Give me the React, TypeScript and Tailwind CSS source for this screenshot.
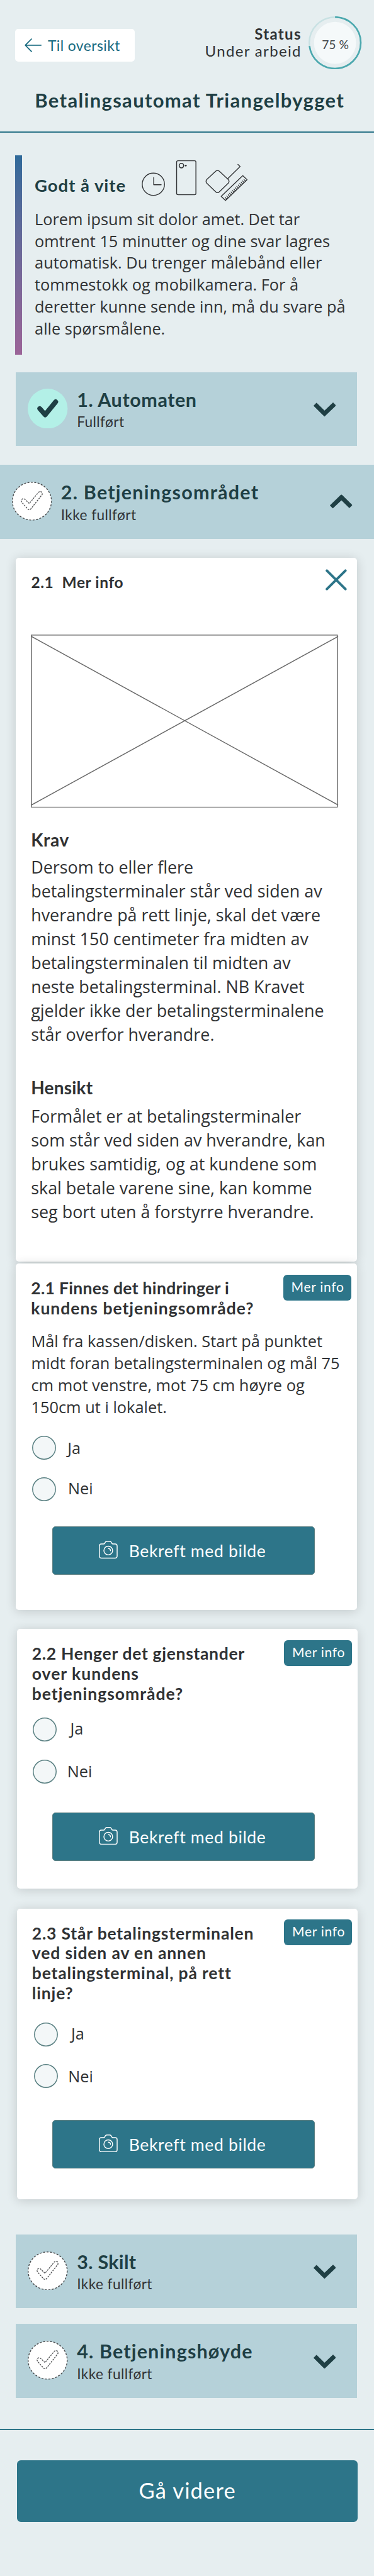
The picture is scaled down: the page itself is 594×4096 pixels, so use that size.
import type { ReactNode } from "react";
import clsx from "clsx";

function BackArrow() {
  return (
    <svg className="h-[22px] w-[27px]" viewBox="0 0 27 22" fill="none" stroke="#15687e" strokeWidth="1.7" strokeLinecap="round" strokeLinejoin="round">
      <path d="M11 1 L1.2 10.8 L11 20.8 M1.2 10.8 H26.2" />
    </svg>
  );
}

function Progress() {
  return (
    <div className="relative h-[84.2px] w-[84.2px]">
      <svg className="h-full w-full" viewBox="0 0 84 84" fill="none">
        <circle cx="42" cy="42" r="33.3" fill="#f5f9fa" />
        <circle cx="42" cy="42" r="40.8" stroke="#c8e1e3" strokeWidth="2.4" />
        <circle cx="42" cy="42" r="40.8" stroke="#4ba8ae" strokeWidth="2.6" pathLength="100" strokeDasharray="73 27" transform="rotate(-90 42 42)" />
      </svg>
      <span className="absolute inset-x-0 top-0 text-center text-[19.3px] leading-[89px] text-[#444648]">75 %</span>
    </div>
  );
}

const TICKS = Array.from({ length: 14 }, (_, i) => (i + 0.9) / 15);

function ToolIcons() {
  return (
    <svg className="h-[83.4px] w-[174.2px]" viewBox="36 6 660 316" fill="none" stroke="#303234" strokeWidth="5.2" strokeLinecap="round" strokeLinejoin="round">
      <circle cx="114" cy="180" r="67" />
      <path d="M116 139 V183 H161" />
      <rect x="254" y="38.500" width="116" height="205" rx="8" />
      <circle cx="283" cy="68" r="13.500" strokeWidth="6" />
      <circle cx="309" cy="68" r="5.500" fill="#303234" stroke="none" />
      <path d="M489 102 Q500 92 511 102 L564 151 Q575 163 564 175 L511 226 Q500 236 489 226 L436 175 Q426 163 436 151 Z" />
      <path d="M561 147 L636 73 L623 61" />
      <path d="M652 128 L678 153 L548 278 L522 253 Z" />
      {TICKS.map((t) => (
        <path key={t} strokeWidth="4.500" d={`M${548 + 130 * t} ${278 - 125 * t} l-9 -11`} />
      ))}
    </svg>
  );
}

function DoneMark() {
  return (
    <svg className="mt-[25.8px] h-[63.5px] w-[63.4px] shrink-0" viewBox="0 0 63.4 63.5" fill="none">
      <circle cx="31.700" cy="31.750" r="31.700" fill="#b3f0e7" />
      <path d="M19.2 31.800 L27.7 41.500 L44.4 21" stroke="#1f3f44" strokeWidth="7.800" strokeLinecap="round" strokeLinejoin="round" />
    </svg>
  );
}

function PendingMark() {
  return (
    <svg className="mt-[26.8px] h-[61.6px] w-[63.4px] shrink-0" viewBox="27 54 240 233" fill="none" stroke="#4c4e50">
      <ellipse cx="147" cy="170.500" rx="117.500" ry="114" fill="#fff" strokeWidth="5.500" strokeDasharray="11.500 9.200" />
      <path strokeWidth="5.200" strokeDasharray="10 6" d="M131 185 L105 160 Q97 152 88 159 Q80 167 86 177 L122 218 Q131 226 140 218 L208 132 Q212 122 204 115 Q195 110 187 117 Z" />
    </svg>
  );
}

function Chevron({ up = false }: { up?: boolean }) {
  return (
    <svg className={clsx("ml-auto h-[22.4px] w-[35.6px]", up ? "mt-[46.4px] mr-[34px] rotate-180" : "mt-[48.3px] mr-[33.6px]")} viewBox="0 0 35.6 22.4" fill="#1f3f44" stroke="#1f3f44" strokeWidth="1.2" strokeLinejoin="round">
      <path d="M.7 5.200 L4.700 1.200 L17.400 13.700 L31 .7 L34.900 4.700 L17.400 21.700 Z" />
    </svg>
  );
}

function CameraIcon() {
  return (
    <svg className="h-[28.2px] w-[29.9px]" viewBox="0 0 79 75" fill="none" stroke="#fff" strokeWidth="3.800" strokeLinecap="round" strokeLinejoin="round">
      <path d="M10 13.500 H19 Q23 13.500 25 9.500 L28 4.500 Q30 2 34 2 H45 Q49 2 51 4.500 L54 9.500 Q56 13.500 60 13.500 H69 Q77 13.500 77 22 V64 Q77 73 69 73 H10 Q2 73 2 64 V22 Q2 13.500 10 13.500 Z" />
      <circle cx="39.500" cy="41" r="18.500" />
      <path d="M40 32.500 Q49 33 49 42" />
    </svg>
  );
}

function Section({ title, status, spacing, done, open }: { title: string; status: string; spacing: string; done?: boolean; open?: boolean }) {
  return (
    <section className={clsx("flex h-[117.2px] items-start bg-[#b5d1d9] pl-[18.9px]", open ? "w-full" : "ml-[25.4px] w-[541.6px]")}>
      {done ? <DoneMark /> : <PendingMark />}
      <div className="mt-[25px] ml-[14.5px]">
        <h2 className={clsx("text-[30.5px] leading-[36px] font-bold text-[#1f3f44]", spacing)}>{title}</h2>
        <p className="mt-[4.2px] text-[22.7px] leading-[28px] tracking-[0.4px]">{status}</p>
      </div>
      <Chevron up={open} />
    </section>
  );
}

function Card({ className, children }: { className: string; children: ReactNode }) {
  return <section className={clsx("w-[541.6px] rounded-[5px] bg-white shadow-[0_2px_17px_rgba(0,0,0,0.16)]", className)}>{children}</section>;
}

function QuestionHeader({ lines }: { lines: [string, string][] }) {
  return (
    <div className="flex items-start justify-between pr-[9.4px] pl-[23.9px]">
      <h3 className="mt-[23.8px] text-[26.5px] leading-[31.7px] font-bold">
        {lines.map(([text, spacing]) => (
          <span key={text} className={clsx("block whitespace-nowrap", spacing)}>{text}</span>
        ))}
      </h3>
      <button className="mt-[17.4px] h-[41px] w-[108.1px] shrink-0 rounded-[6px] bg-[#2d7589] pl-[13px] text-left text-[21px] tracking-[0.73px] text-white">
        <span className="block h-[41px] leading-[37px]">Mer info</span>
      </button>
    </div>
  );
}

function Radio({ label, className, labelClass }: { label: string; className: string; labelClass: string }) {
  return (
    <label className={clsx("flex h-[38px] items-start", className)}>
      <svg className="h-[38px] w-[38px] shrink-0" viewBox="0 0 38 38">
        <circle cx="19" cy="19" r="18.200" fill="#f3f7f8" stroke="#5c8284" strokeWidth="1.500" />
      </svg>
      <span className={clsx("font-['Open_Sans',sans-serif] text-[25.3px]", labelClass)}>{label}</span>
    </label>
  );
}

function PhotoButton({ className }: { className: string }) {
  return (
    <button className={clsx("flex h-[77.4px] w-[417.8px] items-start rounded-[5px] border border-[#5b7f82] bg-[#2d7589] text-white", className)}>
      <span className="mt-[22.5px] ml-[73.2px]"><CameraIcon /></span>
      <span className="ml-[18px] h-[75px] text-[26.5px] leading-[77px] tracking-[0.66px]">Bekreft med bilde</span>
    </button>
  );
}

export default function App() {
  return (
    <main className="flex h-[4096px] w-[594px] flex-col overflow-hidden bg-[#e6eef0] font-['Lato',sans-serif] text-[#303234]">
      <header>
        <div className="flex items-start pt-[25.6px] pr-[19.4px] pl-[23.9px]">
          <button className="mt-[20.3px] flex h-[52.3px] w-[189.7px] items-center rounded-[5px] bg-white pl-[15.5px] text-[#15687e]">
            <BackArrow />
            <span className="ml-[9.5px] text-[22.8px] leading-[52px] tracking-[0.45px]">Til oversikt</span>
          </button>
          <div className="mt-[14.3px] mr-[11.5px] ml-auto text-right text-[24px] leading-[27.2px] tracking-[1.35px]">
            <p className="font-bold">Status</p>
            <p>Under arbeid</p>
          </div>
          <Progress />
        </div>
        <h1 className="mt-[28.9px] mb-[30.3px] pl-[55.3px] text-[31px] leading-[40px] font-bold tracking-[1.32px] whitespace-nowrap text-[#1f3f44]">Betalingsautomat Triangelbygget</h1>
        <hr className="h-[2px] border-0 bg-[#2d7589]" />
      </header>

      <section className="mt-[36px] flex h-[316.7px] pl-[23.9px]">
        <div className="w-[11px] shrink-0 bg-linear-to-b from-[#2f6a9a] to-[#9b6498]" />
        <div className="pl-[20.2px]">
          <div className="flex h-[83.7px]">
            <h2 className="mt-[28.2px] w-[168px] text-[27.5px] leading-[40px] font-bold tracking-[0.96px] text-[#1f3f44]">Godt å vite</h2>
            <ToolIcons />
          </div>
          <p className="font-['Open_Sans',sans-serif] text-[25.3px] leading-[34.87px] whitespace-nowrap">
            Lorem ipsum sit dolor amet. Det tar<br />omtrent 15 minutter og dine svar lagres<br />automatisk. Du trenger målebånd eller<br />tommestokk og mobilkamera. For å<br />deretter kunne sende inn, må du svare på<br />alle spørsmålene.
          </p>
        </div>
      </section>

      <div className="mt-[28.5px]">
        <Section title="1. Automaten" status="Fullført" spacing="tracking-[0.57px]" done />
      </div>
      <div className="mt-[30px]">
        <Section title="2. Betjeningsområdet" status="Ikke fullført" spacing="tracking-[1.23px]" open />
      </div>

      <Card className="mt-[30px] ml-[25.4px] h-[1119.4px] shrink-0">
        <div className="flex h-[122px] items-start justify-between pr-[15.8px] pl-[24px]">
          <h3 className="mt-[24.7px] text-[24.5px] leading-[30px] font-bold tracking-[0.6px] whitespace-pre">2.1  Mer info</h3>
          <svg className="mt-[18.4px] h-[34px] w-[33.8px]" viewBox="0 0 34 34" stroke="#2d7589" strokeWidth="4" strokeLinecap="round">
            <path d="M2.200 2.200 L31.800 31.800 M31.800 2.200 L2.200 31.800" />
          </svg>
        </div>
        <svg className="ml-[23.8px] block h-[275.4px] w-[488.4px]" viewBox="0 0 488.4 275.4" fill="none" stroke="#6b6b6b" strokeWidth="1.500">
          <rect x=".8" y=".8" width="486" height="273.800" />
          <path d="M1 3 L488 271 M488 3 L1 271" />
        </svg>
        <div className="pl-[23.8px] whitespace-nowrap">
          <h4 className="mt-[34.3px] text-[28px] leading-[34px] font-bold tracking-[0.7px]">Krav</h4>
          <p className="mt-[7.3px] font-['Open_Sans',sans-serif] text-[26.9px] leading-[38px]">
            Dersom to eller flere<br />betalingsterminaler står ved siden av<br />hverandre på rett linje, skal det være<br />minst 150 centimeter fra midten av<br />betalingsterminalen til midten av<br />neste betalingsterminal. NB Kravet<br />gjelder ikke der betalingsterminalene<br />står overfor hverandre.
          </p>
          <h4 className="mt-[48.4px] text-[28px] leading-[34px] font-bold tracking-[0.2px]">Hensikt</h4>
          <p className="mt-[10.5px] font-['Open_Sans',sans-serif] text-[26.9px] leading-[38px]">
            Formålet er at betalingsterminaler<br />som står ved siden av hverandre, kan<br />brukes samtidig, og at kundene som<br />skal betale varene sine, kan komme<br />seg bort uten å forstyrre hverandre.
          </p>
        </div>
      </Card>

      <Card className="mt-[3.2px] ml-[25.4px] h-[551.1px] shrink-0">
        <QuestionHeader lines={[["2.1 Finnes det hindringer i", "tracking-[0.31px]"], ["kundens betjeningsområde?", "tracking-[0.98px]"]]} />
        <p className="mt-[18.8px] pl-[24px] font-['Open_Sans',sans-serif] text-[25.4px] leading-[34.87px] whitespace-nowrap">
          Mål fra kassen/disken. Start på punktet<br />midt foran betalingsterminalen og mål 75<br />cm mot venstre, mot 75 cm høyre og<br />150cm ut i lokalet.
        </p>
        <Radio label="Ja" className="mt-[28.1px] ml-[25.4px]" labelClass="ml-[18.5px] leading-[38px]" />
        <Radio label="Nei" className="mt-[28.6px] ml-[25.4px]" labelClass="ml-[19.3px] leading-[34px]" />
        <PhotoButton className="mt-[39.7px] ml-[57.2px]" />
      </Card>

      <Card className="mt-[30.1px] ml-[26.9px] h-[413.2px] shrink-0">
        <QuestionHeader lines={[["2.2 Henger det gjenstander", "tracking-[0.68px]"], ["over kundens", "tracking-[1px]"], ["betjeningsområde?", "tracking-[1px]"]]} />
        <Radio label="Ja" className="mt-[22px] ml-[25.4px]" labelClass="ml-[21.3px] leading-[34px]" />
        <Radio label="Nei" className="mt-[28.3px] ml-[25.4px]" labelClass="ml-[16.4px] leading-[37px]" />
        <PhotoButton className="mt-[46px] ml-[55.7px]" />
      </Card>

      <Card className="mt-[31.5px] ml-[26.9px] h-[462.4px] shrink-0">
        <QuestionHeader
          lines={[["2.3 Står betalingsterminalen", "tracking-[0.82px]"], ["ved siden av en annen", "tracking-[0.85px]"], ["betalingsterminal, på rett", "tracking-[0.85px]"], ["linje?", "tracking-[0.85px]"]]}
        />
        <Radio label="Ja" className="mt-[30px] ml-[26.9px]" labelClass="ml-[21.3px] leading-[34px]" />
        <Radio label="Nei" className="mt-[28.6px] ml-[26.9px]" labelClass="ml-[16.4px] leading-[38px]" />
        <PhotoButton className="mt-[50.5px] ml-[55.7px]" />
      </Card>

      <div className="mt-[55.6px] flex flex-col gap-[25.2px]">
        <Section title="3. Skilt" status="Ikke fullført" spacing="tracking-[0.3px]" />
        <Section title="4. Betjeningshøyde" status="Ikke fullført" spacing="tracking-[1.15px]" />
      </div>

      <footer className="mt-[49.3px]">
        <hr className="h-[2px] border-0 bg-[#2d7589]" />
        <button className="mt-[48.4px] ml-[26.9px] block h-[98.2px] w-[541.6px] rounded-[6px] bg-[#2d7589] text-[34.5px] tracking-[1.14px] text-white">
          <span className="block h-[98.2px] leading-[95px]">Gå videre</span>
        </button>
      </footer>
    </main>
  );
}
